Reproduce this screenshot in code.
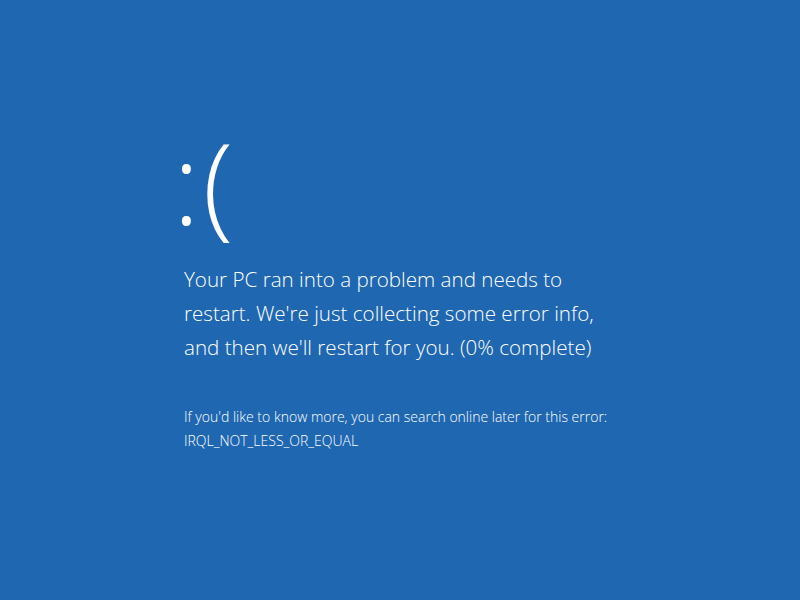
export default function App() {
  return (
    <div className="w-[800px] h-[600px] bg-[#1f67b1] text-white overflow-hidden" style={{ fontFamily: '"Open Sans", "Noto Sans", sans-serif' }}>
      <div className="pl-[184px] pt-[113px]">
        <div className="text-[112px] leading-[138px] font-light tracking-[3px] -ml-[11px] h-[138px]">:(</div>
        <div className="mt-[11px] text-[20.6px] leading-[34px] font-light w-[440px]">
          Your PC ran into a problem and needs to<br />
          restart. We're just collecting some error info,<br />
          and then we'll restart for you. (0% complete)
        </div>
        <div className="mt-[41px] text-[14px] leading-[24px] font-light">
          If you'd like to know more, you can search online later for this error:<br />
          IRQL_NOT_LESS_OR_EQUAL
        </div>
      </div>
    </div>
  );
}
